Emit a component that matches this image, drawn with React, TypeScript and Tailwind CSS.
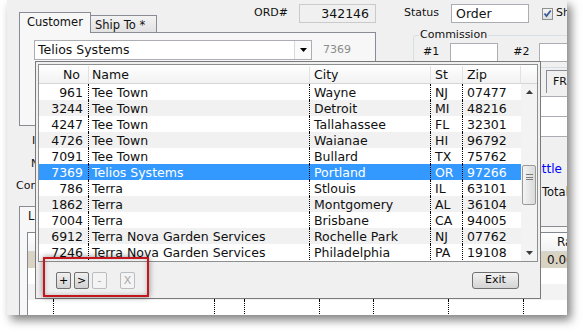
import React from "react";

type Customer = {
  no: string;
  name: string;
  city: string;
  st: string;
  zip: string;
};

const customers: Customer[] = [
  { no: "961", name: "Tee Town", city: "Wayne", st: "NJ", zip: "07477" },
  { no: "3244", name: "Tee Town", city: "Detroit", st: "MI", zip: "48216" },
  { no: "4247", name: "Tee Town", city: "Tallahassee", st: "FL", zip: "32301" },
  { no: "4726", name: "Tee Town", city: "Waianae", st: "HI", zip: "96792" },
  { no: "7091", name: "Tee Town", city: "Bullard", st: "TX", zip: "75762" },
  { no: "7369", name: "Telios Systems", city: "Portland", st: "OR", zip: "97266" },
  { no: "786", name: "Terra", city: "Stlouis", st: "IL", zip: "63101" },
  { no: "1862", name: "Terra", city: "Montgomery", st: "AL", zip: "36104" },
  { no: "7004", name: "Terra", city: "Brisbane", st: "CA", zip: "94005" },
  { no: "6912", name: "Terra Nova Garden Services", city: "Rochelle Park", st: "NJ", zip: "07762" },
  { no: "7246", name: "Terra Nova Garden Services", city: "Philadelphia", st: "PA", zip: "19108" },
];

const selectedNo = "7369";

// columns of the order lines grid that sits behind the picker
const lineCols = [26, 161, 30, 75, 54, 75, 75, 80];
const lineRows = ["bg-[#d9d3c4]", "bg-white", "bg-[#f3f3f3]", "bg-white"];

const Arrow = ({ up }: { up?: boolean }) => (
  <svg width="7" height="4" viewBox="0 0 7 4">
    <path d={up ? "M0 4 L3.5 0 L7 4 Z" : "M0 0 L7 0 L3.5 4 Z"} fill="#3a3a3a" />
  </svg>
);

const SmallButton = ({ label, disabled }: { label: string; disabled?: boolean }) => (
  <div
    className={
      disabled
        ? "flex h-[17px] w-[15px] items-center justify-center rounded-[2px] border border-[#b9bdc0] bg-[#f4f4f4] text-[11px] leading-none text-[#a8a8a8]"
        : "flex h-[17px] w-[15px] items-center justify-center rounded-[2px] border border-[#707070] bg-gradient-to-b from-[#f0f0f0] to-[#d2d2d2] text-[11px] leading-none text-black"
    }
  >
    {label}
  </div>
);

const CustomerPicker = () => (
  <div className="absolute left-[28px] top-[61px] z-20 flex h-[238px] w-[506px] flex-col border border-[#7a7a7a] bg-[#f0f0f0] p-[2px]">
    <div className="flex h-[198px] flex-col border border-[#8e8f8f] bg-white text-[12.5px] text-[#101010]">
      <div className="flex h-[19px] border-b border-[#d5d5d5] bg-gradient-to-b from-white to-[#f2f2f2] pt-px leading-[18px]">
        <div className="w-[50px] border-r border-[#e2e2e2] pr-[8px] text-right">No</div>
        <div className="w-[221px] border-r border-[#e2e2e2] pl-[3px]">Name</div>
        <div className="w-[121px] border-r border-[#e2e2e2] pl-[4px]">City</div>
        <div className="w-[32px] border-r border-[#e2e2e2] pl-[4px]">St</div>
        <div className="w-[58px] border-r border-[#e2e2e2] pl-[4px]">Zip</div>
        <div className="flex-1" />
      </div>
      <div className="flex flex-1">
        <div className="w-[482px]">
          {customers.map((c, i) => {
            const selected = c.no === selectedNo;
            const bg = selected
              ? "bg-[#3399ff] text-white"
              : i % 2 === 1
              ? "bg-[#f1f1f1]"
              : "bg-white";
            return (
              <div key={c.no} className={`flex h-[16px] whitespace-nowrap leading-[17px] ${bg}`}>
                <div className="w-[50px] border-r border-dotted border-black pr-[5px] text-right">{c.no}</div>
                <div className="w-[221px] overflow-hidden border-r border-dotted border-black pl-[3px]">{c.name}</div>
                <div className="w-[121px] overflow-hidden border-r border-dotted border-black pl-[4px]">{c.city}</div>
                <div className="w-[32px] border-r border-dotted border-black pl-[4px]">{c.st}</div>
                <div className="w-[58px] pl-[4px]">{c.zip}</div>
              </div>
            );
          })}
        </div>
        <div className="flex w-[16px] flex-col bg-[#f3f3f3]">
          <div className="flex h-[16px] items-center justify-center">
            <Arrow up />
          </div>
          <div className="flex-1 pt-[65px]">
            <div className="mx-px flex h-[40px] flex-col items-center gap-[1.5px] rounded-[2px] border border-[#9a9a9a] bg-gradient-to-r from-[#f4f4f4] to-[#dadada] pt-[8px]">
              <div className="h-px w-[7px] bg-[#7a7a7a]" />
              <div className="h-px w-[7px] bg-[#7a7a7a]" />
              <div className="h-px w-[7px] bg-[#7a7a7a]" />
            </div>
          </div>
          <div className="flex h-[16px] items-center justify-center">
            <Arrow />
          </div>
        </div>
      </div>
    </div>
    <div className="flex flex-1 items-start pt-[10px]">
      <div className="ml-[18px] flex">
        <SmallButton label="+" />
        <div className="ml-[3px]">
          <SmallButton label=">" />
        </div>
        <div className="ml-[3px]">
          <SmallButton label="-" disabled />
        </div>
        <div className="ml-[13px]">
          <SmallButton label="X" disabled />
        </div>
      </div>
      <div className="ml-auto mr-[19px] flex h-[17px] w-[47px] items-center justify-center rounded-[3px] border border-[#707070] bg-gradient-to-b from-[#f2f2f2] to-[#d4d4d4] text-[11px]">
        Exit
      </div>
    </div>
  </div>
);

export default function App() {
  return (
    <div className="h-[332px] w-[583px] overflow-hidden bg-white font-['DejaVu_Sans',sans-serif] text-[#111]">
      <div className="relative ml-[7px] flex h-[315px] w-[560px] flex-col overflow-hidden bg-[#f0f0f0] shadow-[4px_5px_9px_rgba(0,0,0,0.5)]">
        {/* top part of the order form */}
        <div className="flex h-[206px] shrink-0">
          <div className="w-[389px] shrink-0">
            <div className="ml-[12px] mt-[4px] w-[357px]">
              <div className="flex h-[28px] items-end">
                <div className="relative z-10 -mb-px h-[21px] w-[72px] border border-b-0 border-[#898c95] bg-[#f7f7f7] pl-[7px] pt-[2px] text-[11.5px] leading-[14px]">
                  Customer
                </div>
                <div className="h-[17px] w-[66px] border-r border-t border-[#898c95] bg-gradient-to-b from-[#f3f3f3] to-[#e2e2e2] pl-[4px] pt-[2px] text-[11.5px] leading-[14px]">
                  Ship To *
                </div>
                <div className="ml-auto flex h-[19px] items-center self-start">
                  <span className="mr-[11px] text-[11px]">ORD#</span>
                  <div className="h-[19px] w-[77px] border border-[#cacaca] bg-[#f0f0f0] pr-[6px] text-right text-[12.5px] leading-[17px]">
                    342146
                  </div>
                </div>
              </div>
              <div className="h-[94px] border border-[#898c95] bg-[#f7f7f7] pl-[14px] pt-[7px]">
                <div className="flex items-center">
                  <div className="flex h-[20px] w-[278px] border border-[#abadb3] bg-white">
                    <span className="flex-1 pl-[3px] text-[12.5px] leading-[18px]">Telios Systems</span>
                    <div className="flex w-[17px] items-center justify-center border-l border-[#dadada] bg-[#fafafa]">
                      <svg width="7" height="4" viewBox="0 0 7 4">
                        <path d="M0 0 L7 0 L3.5 4 Z" fill="#000" />
                      </svg>
                    </div>
                  </div>
                  <span className="ml-[11px] text-[11px] text-[#8c8c8c]">7369</span>
                </div>
              </div>
            </div>
            <div className="flex flex-col text-[11px] leading-[16px]">
              <span className="ml-[25px] mt-[7px]">Inv</span>
              <span className="ml-[24px] mt-[7px]">Name</span>
              <span className="ml-[9px] mt-[6px]">Contact</span>
            </div>
          </div>
          <div className="min-w-0 flex-1 overflow-hidden">
            <div className="mt-[4px] flex h-[19px] items-center whitespace-nowrap">
              <span className="ml-[8px] text-[11px]">Status</span>
              <div className="ml-[12px] h-[19px] w-[78px] shrink-0 border border-[#abadb3] bg-white pl-[4px] text-[12.5px] leading-[17px]">
                Order
              </div>
              <div className="ml-[13px] flex h-[12px] w-[11px] shrink-0 items-center justify-center border border-[#8e8f8f] bg-gradient-to-b from-[#f6f6f6] to-[#dedede]">
                <svg width="9" height="9" viewBox="0 0 9 9">
                  <path d="M1.5 4.5 L3.5 7 L7.8 1.5" stroke="#3c5a96" strokeWidth="1.8" fill="none" />
                </svg>
              </div>
              <span className="ml-[3px] text-[11px]">Ship</span>
            </div>
            <fieldset className="ml-[17px] mt-[5px] w-[200px] rounded-[3px] border border-[#d5dfe5] pb-[5px]">
              <legend className="ml-[5px] px-[1px] text-[11px] leading-[14px]">Commission</legend>
              <div className="mt-px flex items-center text-[11px]">
                <span className="ml-[9px]">#1</span>
                <div className="ml-[11px] h-[19px] w-[48px] shrink-0 border border-[#abadb3] bg-white" />
                <span className="ml-[15px]">#2</span>
                <div className="ml-[10px] h-[19px] w-[48px] shrink-0 border border-[#abadb3] bg-white" />
              </div>
            </fieldset>
            <div className="ml-[150px] mt-[2px] h-[23px] w-[80px] whitespace-nowrap border-l border-t border-[#898c95] pl-[6px] text-[11px] leading-[22px]">
              FREIGHT
            </div>
            <div className="ml-[140px] mt-[3px] h-[21px] w-[80px] border border-[#abadb3] bg-white" />
            <div className="ml-[140px] h-[20px] w-[80px] border border-t-0 border-[#abadb3] bg-white" />
            <div className="ml-[123px] mt-[24px] whitespace-nowrap text-[12px] leading-[16px] text-[#0000ff]">Shuttle</div>
            <div className="ml-[146px] mt-[7px] whitespace-nowrap text-[11.5px] leading-[16px]">Total</div>
          </div>
        </div>

        {/* order lines tab */}
        <div className="ml-[12px] flex flex-1 flex-col">
          <div className="flex h-[20px]">
            <div className="relative z-10 -mb-px w-[60px] border border-b-0 border-[#898c95] bg-[#f7f7f7] pl-[8px] pt-[2px] text-[11.5px] leading-[14px]">
              Lines
            </div>
          </div>
          <div className="flex-1 border-l border-t border-[#898c95] bg-[#f7f7f7] pl-[7px] pt-[5px]">
            <div className="h-full border-l border-t border-[#828790] bg-white text-[12px]">
              <div className="flex h-[19px] border-b border-[#d5d5d5] bg-gradient-to-b from-white to-[#f2f2f2] leading-[18px]">
                {lineCols.map((w, i) => (
                  <div
                    key={i}
                    style={{ width: w }}
                    className={i === 7 ? "shrink-0 pl-[33px]" : "shrink-0 border-r border-[#e2e2e2]"}
                  >
                    {i === 7 ? "Rate" : ""}
                  </div>
                ))}
              </div>
              {lineRows.map((bg, r) => (
                <div key={r} className={`flex h-[16px] leading-[16px] ${bg}`}>
                  {lineCols.map((w, i) => (
                    <div
                      key={i}
                      style={{ width: w }}
                      className={i === 7 ? "shrink-0 pl-[23px]" : "shrink-0 border-r border-dotted border-black"}
                    >
                      {r === 0 && i === 7 ? "0.00" : ""}
                    </div>
                  ))}
                </div>
              ))}
            </div>
          </div>
        </div>

        <CustomerPicker />

        {/* highlight around the record buttons */}
        <div className="absolute left-[36px] top-[257px] z-30 h-[40px] w-[106px] border-2 border-[#c4161c] shadow-[0_0_6px_rgba(0,0,0,0.45),inset_0_0_4px_rgba(0,0,0,0.25)]" />
      </div>
    </div>
  );
}
